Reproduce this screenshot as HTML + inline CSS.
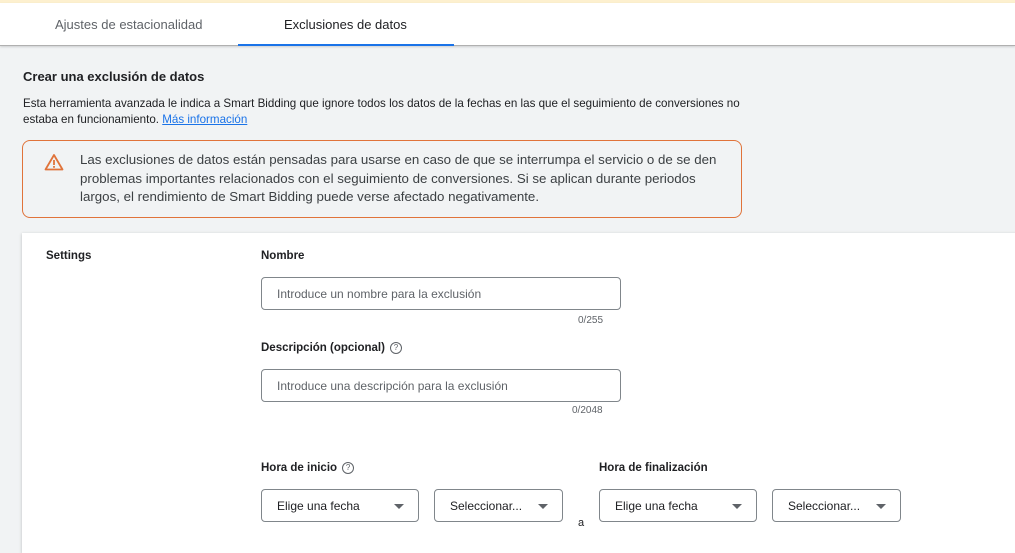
<!DOCTYPE html>
<html><head><meta charset="utf-8"><style>
*{margin:0;padding:0;box-sizing:border-box}
body{width:1015px;height:543px;overflow:hidden;background:#f1f3f4;font-family:"Liberation Sans",Arial,sans-serif;color:#202124;position:relative}
.a{position:absolute;white-space:nowrap}
.top{position:absolute;left:0;top:0;width:1015px;height:3px;background:#fdf0cf}
.tabs{position:absolute;left:0;top:3px;width:1015px;height:43px;background:#fff;border-bottom:1px solid #b0b0b0;box-shadow:0 1px 2px rgba(0,0,0,.15)}
.ul{position:absolute;left:238px;top:44px;width:216px;height:2px;background:#1a73e8}
.warn{position:absolute;left:22px;top:140px;width:720px;height:78px;border:1px solid #e0733a;border-radius:8px;background:#f1f3f4}
.card{position:absolute;left:22px;top:233px;width:1000px;height:320px;background:#fff;box-shadow:0 1px 3px rgba(60,64,67,.3)}
.b{font-weight:bold;font-size:11.5px}
.inp{position:absolute;border:1px solid #80868b;border-radius:4px;font-size:12px;color:#5f6368;padding-left:15px;display:flex;align-items:center}
.sel{position:absolute;border:1px solid #80868b;border-radius:4px;font-size:12px;color:#202124;padding-left:15px;display:flex;align-items:center}
.sel:after{content:"";position:absolute;right:14px;top:14px;border-left:5px solid transparent;border-right:5px solid transparent;border-top:5px solid #5f6368}
.cnt{font-size:10px;color:#5f6368}
.q{display:inline-block;width:12px;height:12px;border:1px solid #5f6368;border-radius:50%;font-size:8px;text-align:center;line-height:10px;color:#5f6368;font-weight:normal;vertical-align:1px;margin-left:5px}
</style></head><body>
<div class="top"></div>
<div class="tabs"></div>
<div class="a" style="left:55px;top:17px;font-size:13px;color:#5f6368">Ajustes de estacionalidad</div>
<div class="a" style="left:284px;top:17px;font-size:13px;color:#202124">Exclusiones de datos</div>
<div class="ul"></div>
<div class="a" style="left:23px;top:69px;font-size:13px;font-weight:bold">Crear una exclusión de datos</div>
<div class="a" style="left:23px;top:96px;font-size:11.6px;line-height:15.5px">Esta herramienta avanzada le indica a Smart Bidding que ignore todos los datos de la fechas en las que el seguimiento de conversiones no<br>estaba en funcionamiento. <span style="color:#1a73e8;text-decoration:underline">Más información</span></div>
<div class="warn"></div>
<svg class="a" style="left:44px;top:153px" width="20" height="18" viewBox="0 0 20 18"><path d="M10 2 L18.5 16.5 L1.5 16.5 Z" fill="none" stroke="#e0733a" stroke-width="1.8" stroke-linejoin="round"/><rect x="9.1" y="7" width="1.8" height="5" fill="#e0733a"/><rect x="9.1" y="13" width="1.8" height="1.8" fill="#e0733a"/></svg>
<div class="a" style="left:80px;top:151px;font-size:13.3px;line-height:18.5px;color:#3c4043">Las exclusiones de datos están pensadas para usarse en caso de que se interrumpa el servicio o de se den<br>problemas importantes relacionados con el seguimiento de conversiones. Si se aplican durante periodos<br>largos, el rendimiento de Smart Bidding puede verse afectado negativamente.</div>
<div class="card"></div>
<div class="a b" style="left:46px;top:250px">Settings</div>
<div class="a b" style="left:261px;top:250px">Nombre</div>
<div class="inp" style="left:261px;top:277px;width:360px;height:33px">Introduce un nombre para la exclusión</div>
<div class="a cnt" style="left:578px;top:315px">0/255</div>
<div class="a b" style="left:261px;top:342px">Descripción (opcional)<span class="q">?</span></div>
<div class="inp" style="left:261px;top:369px;width:360px;height:33px">Introduce una descripción para la exclusión</div>
<div class="a cnt" style="left:572px;top:405px">0/2048</div>
<div class="a b" style="left:261px;top:462px">Hora de inicio<span class="q">?</span></div>
<div class="a b" style="left:599px;top:462px">Hora de finalización</div>
<div class="sel" style="left:261px;top:489px;width:158px;height:33px">Elige una fecha</div>
<div class="sel" style="left:434px;top:489px;width:129px;height:33px">Seleccionar...</div>
<div class="a" style="left:578px;top:517px;font-size:11px">a</div>
<div class="sel" style="left:599px;top:489px;width:158px;height:33px">Elige una fecha</div>
<div class="sel" style="left:772px;top:489px;width:129px;height:33px">Seleccionar...</div>
</body></html>
